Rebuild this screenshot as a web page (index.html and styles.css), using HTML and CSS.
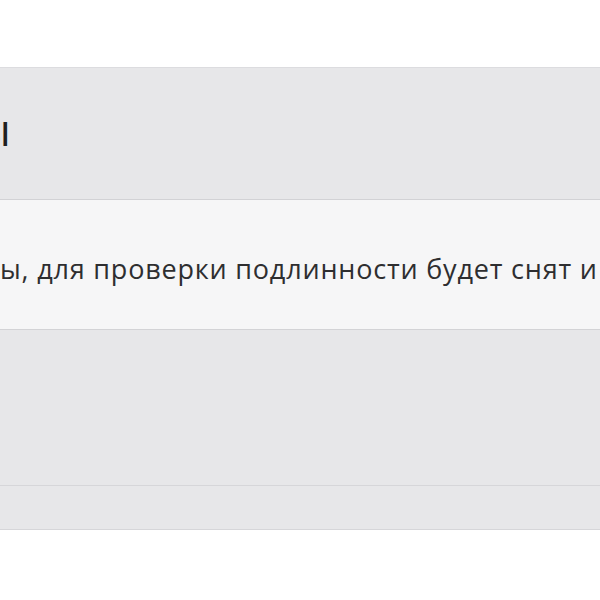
FILE: index.html
```
<!DOCTYPE html>
<html lang="ru">
<head>
<meta charset="utf-8">
<title>Панель</title>
<link rel="stylesheet" href="styles.css">
</head>
<body>
<div class="page">
  <div class="top"></div>
  <section class="card">
    <header class="card-head"><h2 class="card-title">ы</h2></header>
    <div class="card-body"><p class="card-text">ы, для проверки подлинности будет снят и</p></div>
    <div class="card-foot"></div>
    <div class="card-row"></div>
  </section>
</div>
</body>
</html>
```
FILE: styles.css
```
html, body {
  margin: 0;
  padding: 0;
  background: #ffffff;
  overflow: hidden;
}
.page {
  width: 600px;
  height: 600px;
  overflow: hidden;
  font-family: "Open Sans", "Noto Sans", sans-serif;
  color: #2a2a2c;
}
.top {
  height: 67px;
}
.card {
  display: flex;
  flex-direction: column;
}
.card-head {
  height: 133px;
  background: #e7e7e9;
  border-top: 1px solid #dcdcdf;
  border-bottom: 1px solid #d2d2d5;
  display: flex;
  align-items: center;
  padding-bottom: 10px;
  box-sizing: border-box;
}
.card-title {
  margin: 0;
  font-size: 44px;
  font-weight: 400;
  line-height: 1;
  text-indent: -23px;
  white-space: nowrap;
  color: #1f1f21;
}
.card-body {
  height: 130px;
  background: #f6f6f7;
  border-bottom: 1px solid #d3d3d6;
  display: flex;
  align-items: center;
  padding-top: 8px;
  box-sizing: border-box;
}
.card-text {
  margin: 0;
  font-size: 27px;
  letter-spacing: 0.8px;
  line-height: 1;
  white-space: nowrap;
  color: #2e2e30;
}
.card-foot {
  height: 156px;
  background: #e7e7e9;
  border-bottom: 1px solid #d6d6d9;
  box-sizing: border-box;
}
.card-row {
  height: 44px;
  background: #e7e7e9;
  border-bottom: 1px solid #d6d6d9;
  box-sizing: border-box;
}
```
